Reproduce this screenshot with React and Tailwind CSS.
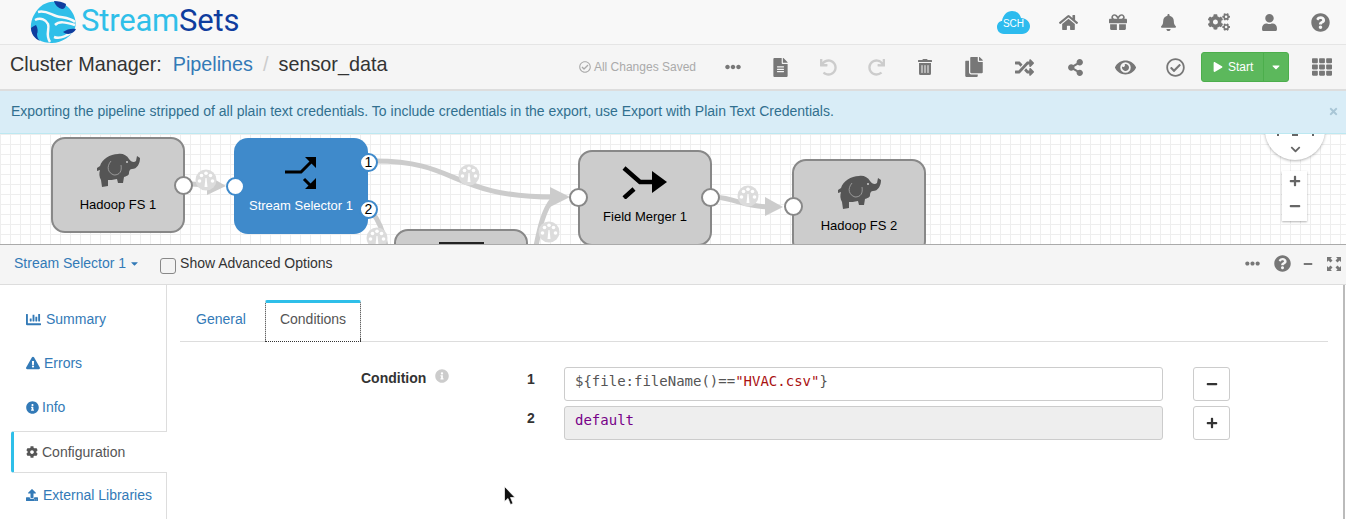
import {
  FaHome, FaGift, FaBell, FaCogs, FaUser, FaQuestionCircle, FaEllipsisH, FaFileAlt, FaUndo, FaRedo,
  FaTrashAlt, FaCopy, FaRandom, FaShareAlt, FaEye, FaRegCheckCircle, FaPlay, FaCaretDown, FaTh,
  FaChevronDown, FaPlus, FaMinus, FaChartBar, FaExclamationTriangle, FaInfoCircle, FaCog, FaUpload, FaTimes,
} from 'react-icons/fa';

const toolbarIcons = [
  { Icon: FaEllipsisH, w: 'w-[47px]', size: 16, color: 'text-[#777]' },
  { Icon: FaFileAlt, w: 'w-[48px]', size: 19, color: 'text-[#777]' },
  { Icon: FaUndo, w: 'w-[48px]', size: 17, color: 'text-[#ccc]' },
  { Icon: FaRedo, w: 'w-[49px]', size: 17, color: 'text-[#ccc]' },
  { Icon: FaTrashAlt, w: 'w-[48px]', size: 16, color: 'text-[#777]' },
  { Icon: FaCopy, w: 'w-[50px]', size: 20, color: 'text-[#777]' },
  { Icon: FaRandom, w: 'w-[51px]', size: 19, color: 'text-[#777]' },
  { Icon: FaShareAlt, w: 'w-[50px]', size: 17, color: 'text-[#777]' },
  { Icon: FaEye, w: 'w-[50px]', size: 21, color: 'text-[#777]' },
  { Icon: FaRegCheckCircle, w: 'w-[51px]', size: 19, color: 'text-[#777]' },
];

const topIcons = [
  { Icon: FaHome, w: 'w-[49px]', size: 19 },
  { Icon: FaGift, w: 'w-[50px]', size: 18 },
  { Icon: FaBell, w: 'w-[50px]', size: 17 },
  { Icon: FaCogs, w: 'w-[52px]', size: 22 },
  { Icon: FaUser, w: 'w-[49px]', size: 17 },
  { Icon: FaQuestionCircle, w: 'w-[52px]', size: 19 },
];

const navItems = [
  { label: 'Summary', Icon: FaChartBar, gap: 'gap-[5px]', size: 15 },
  { label: 'Errors', Icon: FaExclamationTriangle, gap: 'gap-[4px]', size: 14 },
  { label: 'Info', Icon: FaInfoCircle, gap: 'gap-[3px]', size: 13 },
];

function Logo() {
  return (
    <svg width="46" height="42" viewBox="0 0 46 42" className="shrink-0">
      <path d="M10 6C16 0 30-2 38 6c6 6 9 14 7 21-3 8-13 15-23 15C12 42 3 38 1 28 0 20 4 12 10 6z" fill="#2fbfe9" />
      <path d="M8 11c7-2 12 2 18 4 6 2 13 1 19 6M5 19c6-3 11 0 13 4 2 5-3 10 2 18M25 24c4-4 10-3 20 0M24 36c5 2 11 0 18-5" fill="none" stroke="#f8f8f8" strokeWidth="2.5" />
      <path d="M24 0c4 0 9 1 12 3 0 3-2 5-4 5-4-1-7-4-8-8z" fill="#0f3d9e" />
      <path d="M6 24c2 3 2 7 1 9 0 3 1 5 3 7-5-2-9-7-9-13 1-1 3-2 5-3z" fill="#0f3d9e" />
      <path d="M33 31c4-3 9-4 13-3-2 4-8 7-13 3z" fill="#0f3d9e" />
    </svg>
  );
}

function Elephant() {
  return (
    <svg width="44" height="34" viewBox="0 0 44 34" className="mb-[8px]">
      <path d="M1 15l3-2C6 6 14 1 22 1c4-1 9 1 11 5 2 3 5 4 7 2l1-5 3 2c0 6-3 11-8 11-2 0-3 2-3 4 0 3-3 3-5 4l-1 6h-5l-1-4c-4 1-7 1-9 1v6l-6 1-1-7c-2-3-2-7-1-10l-3 1z" fill="#555" />
      <path d="M15 8c-5 6-3 12 3 14 6 0 8-4 7-10" fill="none" stroke="#aaa" strokeWidth="0.8" />
      <circle cx="31" cy="9" r="1" fill="#ccc" />
    </svg>
  );
}

function Node({ className, label, children, selected, labelClass = 'mt-[2px]' }) {
  return (
    <div className={`absolute w-[134px] h-[96px] rounded-[14px] flex flex-col items-center pt-[15px] ${className} ${selected ? 'bg-[#3f8acb] text-white' : 'bg-[#ccc] border-2 border-[#888] text-black'}`}>
      <div className="h-[40px] flex items-center justify-center">{children}</div>
      <div className={`text-[13px] leading-[16px] whitespace-nowrap ${labelClass}`}>{label}</div>
    </div>
  );
}

function Port({ className, blue, label }) {
  return (
    <div className={`absolute w-[19px] h-[19px] rounded-full bg-white border-2 flex items-center justify-center text-[14px] text-black ${blue ? 'border-[#3f8acb]' : 'border-[#888]'} ${className}`}>
      {label}
    </div>
  );
}

function Gauge({ cx, cy }) {
  return (
    <g transform={`translate(${cx} ${cy})`} fill="#fff" stroke="none">
      <circle r="10.5" fill="#dcdcdc" />
      <circle cx="-6.500" cy="1" r="1.800" />
      <circle cx="-4.500" cy="-4.500" r="1.800" />
      <circle cx="0" cy="-6.800" r="1.800" />
      <circle cx="4.500" cy="-4.500" r="1.800" />
      <circle cx="6.500" cy="1" r="1.800" />
      <path d="M-1.500 7h3l-1-9h-1z" />
    </g>
  );
}

function Canvas() {
  return (
    <div className="relative h-[110px] overflow-hidden bg-white bg-[linear-gradient(#eee_1px,transparent_1px),linear-gradient(90deg,#eee_1px,transparent_1px)] bg-[size:10px_10px]">
      {/* edges */}
      <svg width="1346" height="110" className="absolute left-0 top-0">
        <g transform="translate(0 -134)" fill="none" stroke="#ccc" strokeWidth="5">
          <path d="M190 184L212 185" />
          <path d="M375 161C460 161 450 197 555 197" />
          <path d="M372 212C380 222 384 235 386 246" />
          <path d="M536 246C540 226 544 210 552 200" />
          <path d="M716 197C735 199 745 206 768 207" />
          <path d="M207 175l19 11-19 9z" fill="#ccc" stroke="none" />
          <path d="M550 187l20 10-20 10z" fill="#ccc" stroke="none" />
          <path d="M765 197l18 10-18 9z" fill="#ccc" stroke="none" />
          <Gauge cx={206} cy={180} />
          <Gauge cx={469} cy={175} />
          <Gauge cx={377} cy={238} />
          <Gauge cx={549} cy={232} />
          <Gauge cx={748} cy={196} />
        </g>
      </svg>

      <Node className="left-[51px] top-[3px]" label="Hadoop FS 1" labelClass="mt-[3px]"><Elephant /></Node>
      <Node className="left-[234px] top-[4px]" label="Stream Selector 1" labelClass="mt-[5px]" selected>
        <svg width="32" height="32" viewBox="0 0 32 32">
          <path d="M0 15H16L28 3M19 22l7 7" fill="none" stroke="#000" strokeWidth="3" />
          <path d="M20 0H31V11zM31 21V32H20z" fill="#000" />
        </svg>
      </Node>
      <Node className="left-[394px] top-[95px]" label="">
        <div className="w-[45px] h-[2px] bg-[#222] mb-[46px]" />
      </Node>
      <Node className="left-[578px] top-[16px]" label="Field Merger 1">
        <svg width="46" height="34" viewBox="0 0 46 34" className="mb-[11px]">
          <path d="M2 3L18 17H34M2 33L12 24" fill="none" stroke="#000" strokeWidth="4.5" />
          <path d="M30 6L45 17L30 28z" fill="#000" />
        </svg>
      </Node>
      <Node className="left-[792px] top-[25px]" label="Hadoop FS 2"><Elephant /></Node>

      <Port className="left-[174px] top-[42px]" />
      <Port className="left-[226px] top-[43px]" blue />
      <Port className="left-[359px] top-[19px]" blue label="1" />
      <Port className="left-[359px] top-[66px]" blue label="2" />
      <Port className="left-[569px] top-[54px]" />
      <Port className="left-[701px] top-[54px]" />
      <Port className="left-[784px] top-[63px]" />

      {/* pan and zoom controls */}
      <div className="absolute left-[1265px] top-[-34px] w-[60px] h-[60px] rounded-full bg-white shadow-[0_1px_3px_rgba(0,0,0,0.3)] flex items-end justify-center pb-[5px] text-[#666]">
        <div className="absolute left-[12px] top-[34px] w-[2px] h-[2px] bg-[#666]" />
        <div className="absolute left-[27px] top-[34px] w-[6px] h-[2px] bg-[#666]" />
        <div className="absolute left-[47px] top-[34px] w-[2px] h-[2px] bg-[#666]" />
        <FaChevronDown size={11} />
      </div>
      <div className="absolute left-[1282px] top-[37px] w-[25px] h-[50px] bg-white shadow-[0_1px_2px_rgba(0,0,0,0.3)] flex flex-col items-center pt-[4px] gap-[13px] text-[#666]">
        <FaPlus size={12} />
        <FaMinus size={12} />
      </div>
    </div>
  );
}

export default function App() {
  return (
    <div className="w-[1346px] h-[519px] overflow-hidden bg-white font-['Liberation_Sans',Arial,sans-serif] text-[14px] text-[#333]">
      {/* logo bar */}
      <div className="h-[45px] bg-[#f8f8f8] border-b border-[#e5e5e5] flex items-center pl-[30px]">
        <Logo />
        <div className="ml-[5px] font-['Roboto',sans-serif] text-[31px] leading-[36px] tracking-[-0.2px] -mt-[3px]">
          <span className="text-[#2fbfe9]">Stream</span><span className="text-[#0f3d9e]">Sets</span>
        </div>
        <div className="ml-auto flex items-center">
          <div className="relative w-[33px] h-[24px] mr-[14px] flex items-center justify-center">
            <svg width="33" height="24" viewBox="0 0 33 24" className="absolute left-0 top-0">
              <path d="M7 24C2 24 0 20 0 17c0-4 3-6 5-6C6 5 10 1 15 1c5 0 8 3 9 7 5 0 9 4 9 8s-3 8-8 8z" fill="#2dbbee" />
            </svg>
            <span className="relative text-[10px] text-white mt-[2px]">SCH</span>
          </div>
          {topIcons.map(({ Icon, w, size }, i) => (
            <div key={i} className={`${w} flex justify-center text-[#777]`}><Icon size={size} /></div>
          ))}
        </div>
      </div>

      {/* pipeline toolbar */}
      <div className="h-[46px] bg-[#f5f5f5] border-b-2 border-[#ddd] flex items-center pl-[10px] pr-[14px]">
        <div className="text-[19.8px] leading-[24px] -mt-[6px] flex items-baseline whitespace-nowrap">
          <span>Cluster Manager:</span>
          <span className="ml-[11px] text-[#337ab7]">Pipelines</span>
          <span className="ml-[10px] text-[#ccc]">/</span>
          <span className="ml-[10px]">sensor_data</span>
        </div>
        <div className="ml-auto flex items-center">
          <div className="flex items-center gap-[3px] text-[12px] text-[#aaa] mr-[13px]">
            <FaRegCheckCircle size={12} />
            <span>All Changes Saved</span>
          </div>
          {toolbarIcons.map(({ Icon, w, size, color }, i) => (
            <div key={i} className={`${w} flex justify-center ${color}`}><Icon size={size} /></div>
          ))}
          <div className="h-[30px] w-[88px] flex rounded-[3px] bg-[#5cb85c] border border-[#4cae4c] text-white text-[12px]">
            <div className="w-[62px] flex items-center pl-[11px] gap-[5px] border-r border-[#4cae4c]">
              <FaPlay size={10} />
              <span>Start</span>
            </div>
            <div className="flex-1 flex items-center justify-center"><FaCaretDown size={12} /></div>
          </div>
          <div className="w-[43px] flex justify-end text-[#777]"><FaTh size={20} /></div>
        </div>
      </div>

      {/* alert */}
      <div className="h-[43px] bg-[#d9edf7] border-b border-[#bce8f1] flex items-center pl-[11px] pr-[7px] pb-[2px] text-[#31708f]">
        <span>Exporting the pipeline stripped of all plain text credentials. To include credentials in the export, use Export with Plain Text Credentials.</span>
        <FaTimes size={11} className="ml-auto text-[#a9c6d6]" />
      </div>

      <Canvas />

      {/* detail pane */}
      <div className="border-t border-[#aaa]">
        <div className="h-[40px] bg-[#f5f5f5] border-b border-[#ddd] flex items-center pl-[14px] pr-[5px] pb-[2px]">
          <span className="text-[#337ab7] -mt-[1px]">Stream Selector 1</span>
          <FaCaretDown size={11} className="ml-[3px] text-[#337ab7]" />
          <div className="ml-[20px] w-[16px] h-[16px] rounded-[3px] border border-[#888] bg-[#f3f3f3] mt-[5px]" />
          <span className="ml-[4px]">Show Advanced Options</span>
          <div className="ml-auto flex items-center text-[#777]">
            <FaEllipsisH size={15} />
            <FaQuestionCircle size={17} className="ml-[14px]" />
            <FaMinus size={10} className="ml-[12px]" />
            <svg width="14" height="14" viewBox="0 0 14 14" className="ml-[14px]" fill="#777">
              <path d="M0 0h5L3.500 1.500 5.500 3.500 3.500 5.500 1.500 3.500 0 5zM14 0v5L12.500 3.500 10.500 5.500 8.500 3.500 10.500 1.500 9 0zM0 14V9l1.500 1.500 2-2 2 2-2 2L5 14zM14 14H9l1.500-1.500-2-2 2-2 2 2L14 9z" />
            </svg>
          </div>
        </div>

        <div className="relative flex h-[234px] border-r-2 border-[#bbb] mr-[1px]">
          {/* side nav */}
          <div className="w-[167px] shrink-0 border-r border-[#ddd] pt-[12px]">
            {navItems.map(({ label, Icon, gap, size }) => (
              <div key={label} className={`h-[44px] flex items-center pl-[26px] ${gap} text-[#337ab7]`}>
                <Icon size={size} />
                <span>{label}</span>
              </div>
            ))}
            <div className="relative z-10 ml-[11px] -mr-px h-[42px] mt-[2px] bg-white border-y border-[#ddd] border-l-[3px] border-l-[#2fbfe9] rounded-l-[3px] flex items-center pl-[12px] gap-[4px] text-[#555]">
              <FaCog size={12} />
              <span>Configuration</span>
            </div>
            <div className="h-[44px] flex items-center pl-[26px] gap-[5px] text-[#337ab7]">
              <FaUpload size={12} />
              <span>External Libraries</span>
            </div>
          </div>

          {/* config form */}
          <div className="flex-1 pl-[13px] pr-[15px] pt-[15px]">
            <div className="h-[42px] border-b border-[#ddd] flex items-end">
              <div className="ml-[16px] w-[69px] h-[41px] pb-[2px] flex items-center text-[#337ab7]">General</div>
              <div className="w-[96px] h-[42px] -mb-px pb-[5px] bg-white border-t-[3px] border-t-[#2fbfe9] border-x border-b border-x-[#333] border-b-[#333] border-dotted rounded-t-[2px] [border-top-style:solid] flex items-center justify-center text-[#555]">Conditions</div>
            </div>
            <div className="flex pt-[25px]">
              <div className="w-[347px] pl-[181px] shrink-0 flex items-start font-bold whitespace-nowrap mt-[1px]">
                <span>Condition</span>
                <FaInfoCircle size={14} className="ml-[9px] mt-[1px] shrink-0 text-[#ccc]" />
              </div>
              <div className="flex flex-col gap-[5px]">
                {[
                  { n: '1', bg: 'bg-white', btn: <FaMinus size={12} />, code: <><span className="text-[#555]">{'${file:fileName()=='}</span><span className="text-[#a11]">"HVAC.csv"</span><span className="text-[#555]">{'}'}</span></> },
                  { n: '2', bg: 'bg-[#eee]', btn: <FaPlus size={12} />, code: <span className="text-[#708]">default</span> },
                ].map(row => (
                  <div key={row.n} className="flex items-start">
                    <div className="w-[37px] font-bold pt-[2px]">{row.n}</div>
                    <div className={`w-[599px] h-[34px] border border-[#ccc] rounded-[3px] ${row.bg} pl-[10px] pt-[3px] font-['DejaVu_Sans_Mono',monospace] text-[14px] leading-[20px]`}>{row.code}</div>
                    <div className="ml-[30px] w-[37px] h-[34px] border border-[#ccc] rounded-[3px] flex items-center justify-center text-[#333]">{row.btn}</div>
                  </div>
                ))}
              </div>
            </div>
          </div>

          {/* mouse pointer */}
          <svg width="13" height="20" viewBox="0 0 13 20" className="absolute left-[504px] top-[201px]">
            <path d="M0.500 0.500V15.500L4 12.500L6.500 18.500L9 17.500L6.500 11.500H11z" fill="#111" stroke="#fff" strokeWidth="0.7" />
          </svg>
        </div>
      </div>
    </div>
  );
}
